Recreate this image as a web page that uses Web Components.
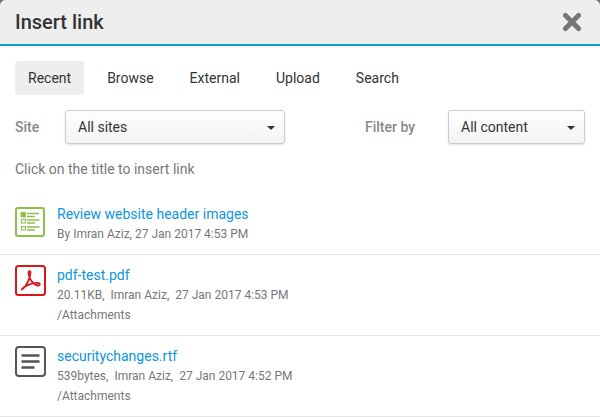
<!DOCTYPE html>
<html>
<head>
<meta charset="utf-8">
<style>
  html, body { margin: 0; padding: 0; background: #6e6e6e; }
  body { font-family: Roboto, sans-serif; width: 600px; height: 417px; overflow: hidden; }
</style>
</head>
<body>
<link-dialog>
  <link-item slot="items" kind="form" title="Review website header images">
    <span>By Imran Aziz, 27 Jan 2017 4:53 PM</span>
  </link-item>
  <link-item slot="items" kind="pdf" title="pdf-test.pdf">
    <span>20.11KB,&nbsp; Imran Aziz,&nbsp; 27 Jan 2017 4:53 PM</span>
    <span>/Attachments</span>
  </link-item>
  <link-item slot="items" kind="text" title="securitychanges.rtf">
    <span>539bytes,&nbsp; Imran Aziz,&nbsp; 27 Jan 2017 4:52 PM</span>
    <span>/Attachments</span>
  </link-item>
</link-dialog>

<script>
const dialogTemplate = document.createElement('template');
dialogTemplate.innerHTML = `
  <style>
    :host { display: block; width: 600px; height: 417px; overflow: hidden; color: #333; background: #fff; border-radius: 6px 6px 0 0; }
    header {
      height: 44px; background: #eee; border-bottom: 2px solid #0d9ddb;
      display: flex; align-items: center; justify-content: space-between;
      padding: 0 18px 0 15px;
    }
    h1 { margin: 0; font-size: 20px; font-weight: 500; color: #333; }
    header svg { display: block; width: 20px; height: 20px; }
    nav { display: flex; padding: 15px 15px 0; }
    nav a { font-size: 14px; line-height: 34px; height: 34px; padding: 0 13px; border-radius: 4px; margin-right: 10px; color: #333; }
    nav a.on { background: #eee; }
    .filters { display: flex; align-items: center; padding: 15px 15px 0; }
    .filters label { font-size: 14px; font-weight: 500; color: #888; }
    .site { width: 50px; }
    .by { margin-left: 80px; width: 83px; }
    .hint { margin: 15px 15px 0; font-size: 14px; line-height: 20px; color: #777; }
    .list { margin-top: 15px; }
  </style>
  <header>
    <h1>Insert link</h1>
    <svg viewBox="0 0 20 20"><path d="M3.5 3.5 L16.5 16.5 M16.5 3.5 L3.5 16.5" stroke="#777" stroke-width="5" stroke-linecap="round" fill="none"/></svg>
  </header>
  <nav>
    <a class="on">Recent</a><a>Browse</a><a>External</a><a>Upload</a><a>Search</a>
  </nav>
  <div class="filters">
    <label class="site">Site</label>
    <drop-down style="width:220px">All sites</drop-down>
    <label class="by">Filter by</label>
    <drop-down style="width:137px">All content</drop-down>
  </div>
  <div class="hint">Click on the title to insert link</div>
  <div class="list"><slot name="items"></slot></div>
`;

class LinkDialog extends HTMLElement {
  constructor() {
    super();
    this.attachShadow({ mode: 'open' });
    this.shadowRoot.appendChild(dialogTemplate.content.cloneNode(true));
  }
}

const dropTemplate = document.createElement('template');
dropTemplate.innerHTML = `
  <style>
    :host {
      display: flex; align-items: center; justify-content: space-between; box-sizing: border-box;
      height: 34px; padding: 0 9px 0 12px; font-size: 14px; color: #333;
      border: 1px solid #ccc; border-radius: 3px;
      background: linear-gradient(#fff, #f3f3f3);
      box-shadow: 0 1px 2px rgba(0,0,0,.12);
    }
    i { width: 0; height: 0; border-left: 4px solid transparent; border-right: 4px solid transparent; border-top: 4px solid #333; margin-top: 2px; }
  </style>
  <slot></slot><i></i>
`;

class DropDown extends HTMLElement {
  constructor() {
    super();
    this.attachShadow({ mode: 'open' });
    this.shadowRoot.appendChild(dropTemplate.content.cloneNode(true));
  }
}

// icon top differs per kind, the form icon sits a bit lower in its box
const icons = {
  form: `<svg viewBox="0 0 32 32" fill="none" stroke="#8cc04b">
    <rect x="1" y="3" width="28" height="28" rx="2" stroke-width="2"/>
    <rect x="6" y="7.5" width="4.5" height="4.5" fill="#8cc04b" stroke-width="0.8"/>
    <rect x="6.5" y="14.5" width="4" height="3.5" stroke-width="1"/>
    <rect x="6.5" y="21.5" width="4" height="3.5" stroke-width="1"/>
    <path d="M12 8.5h12M12 11.5h8M12 15h12.5M12 18h8M12 22h12.5M12 25h8" stroke-width="1.4"/></svg>`,
  pdf: `<svg viewBox="0 0 32 32" fill="none">
    <rect x="1" y="1" width="29" height="29" rx="2.5" stroke="#d9161c" stroke-width="2"/>
    <path d="M7.5 24 C10.5 22.5 15 14 15.5 8 C15.7 5.5 13.5 5.5 13.5 8 C13.5 13 18 19.5 22.5 20.5 C25.5 21 25.5 18 23 18 C18 17.5 10.5 20.5 7.5 23.5 C6.5 25 6.5 24.5 7.5 24Z" stroke="#d9161c" stroke-width="1.8"/></svg>`,
  text: `<svg viewBox="0 0 32 32" fill="none" stroke="#555">
    <rect x="1" y="1" width="29" height="29" rx="3" stroke-width="2"/>
    <path d="M6.5 9.5h18M6.5 15.5h18M6.5 21.5h13" stroke-width="2.4"/></svg>`
};

const itemTemplate = document.createElement('template');
itemTemplate.innerHTML = `
  <style>
    :host { display: flex; padding: 10px 15px; border-bottom: 1px solid #e5e5e5; }
    .icon { width: 32px; height: 32px; margin-right: 10px; flex: none; }
    :host([kind="form"]) .icon { margin-top: 1px; }
    .icon svg { display: block; width: 32px; height: 32px; }
    a { display: block; color: #0d95dc; font-size: 14px; line-height: 20px; }
    .meta { font-size: 12px; line-height: 20px; color: #777; }
    ::slotted(span) { display: block; }
  </style>
  <div class="icon"></div>
  <div>
    <a></a>
    <div class="meta"><slot></slot></div>
  </div>
`;

class LinkItem extends HTMLElement {
  constructor() {
    super();
    this.attachShadow({ mode: 'open' });
    this.shadowRoot.appendChild(itemTemplate.content.cloneNode(true));
    this.shadowRoot.querySelector('a').innerText = this.getAttribute('title');
    this.shadowRoot.querySelector('.icon').innerHTML = icons[this.getAttribute('kind')];
  }
}

customElements.define('drop-down', DropDown);
customElements.define('link-item', LinkItem);
customElements.define('link-dialog', LinkDialog);
</script>
</body>
</html>
